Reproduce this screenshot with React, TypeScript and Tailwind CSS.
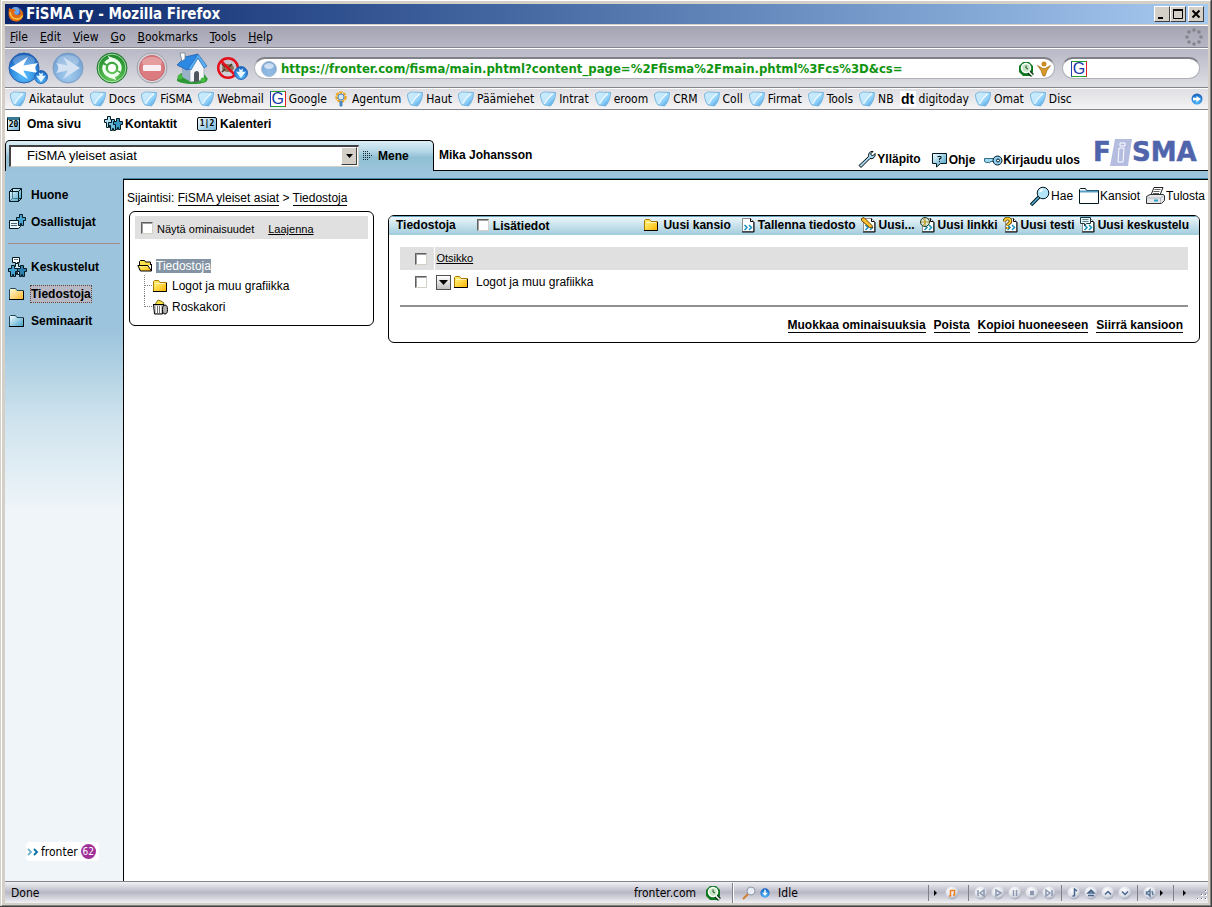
import React from 'react';
import type { ReactNode } from 'react';

const chromeFont = "font-['DejaVu_Sans_Condensed','DejaVu_Sans',sans-serif]";
const pageFont = "font-['Liberation_Sans',Arial,sans-serif]";

type SvgProps = { w?: number; h?: number; box?: string; children: ReactNode };

function Svg({ w = 16, h = 16, box, children }: SvgProps) {
    return (
        <svg width={w} height={h} viewBox={box ?? `0 0 ${w} ${h}`} fill="none" className="shrink-0" aria-hidden="true">
            {children}
        </svg>
    );
}

/* Shared gradients */
function Defs() {
    return (
        <svg width="0" height="0" className="absolute" aria-hidden="true">
            <defs>
                <radialGradient id="blueBall" cx="50%" cy="75%" r="75%">
                    <stop offset="0" stopColor="#5cc0ff" />
                    <stop offset="0.6" stopColor="#2a86dc" />
                    <stop offset="1" stopColor="#1a5cb4" />
                </radialGradient>
                <radialGradient id="paleBall" cx="50%" cy="75%" r="75%">
                    <stop offset="0" stopColor="#a4cef0" />
                    <stop offset="1" stopColor="#6c9cd0" />
                </radialGradient>
                <radialGradient id="greenBall" cx="50%" cy="75%" r="75%">
                    <stop offset="0" stopColor="#6cd060" />
                    <stop offset="1" stopColor="#188428" />
                </radialGradient>
                <radialGradient id="greyBall" cx="40%" cy="30%" r="75%">
                    <stop offset="0" stopColor="#ffffff" />
                    <stop offset="0.6" stopColor="#dcdfe8" />
                    <stop offset="1" stopColor="#9a9eb0" />
                </radialGradient>
                <linearGradient id="mark" x1="0" y1="0" x2="1" y2="1">
                    <stop offset="0" stopColor="#b4e2fc" />
                    <stop offset="0.6" stopColor="#94d4fa" />
                    <stop offset="1" stopColor="#3c94dc" />
                </linearGradient>
                <linearGradient id="yellow" x1="0" y1="0" x2="1" y2="1">
                    <stop offset="0.3" stopColor="#ffe860" />
                    <stop offset="1" stopColor="#ffb000" />
                </linearGradient>
                <linearGradient id="amber" x1="0" y1="0" x2="1" y2="1">
                    <stop offset="0.1" stopColor="#fff4cc" />
                    <stop offset="1" stopColor="#ffb428" />
                </linearGradient>
                <linearGradient id="teal" x1="0" y1="0" x2="1" y2="1">
                    <stop offset="0.1" stopColor="#e8f8ff" />
                    <stop offset="1" stopColor="#3c9cc4" />
                </linearGradient>
            </defs>
        </svg>
    );
}

function FirefoxIcon() {
    return (
        <Svg>
            <circle cx="8" cy="8" r="7.2" fill="#2b4fb0" />
            <circle cx="7.5" cy="5" r="4" fill="#6ca4e8" />
            <path d="M1 2c1 .6 2 1 3 .9C6 2.600 6.800 4 8 4.500 6 5 5.500 6 6.500 7.500 8 9.500 11 9.500 12 7.500c.6-1.500 0-3.500-1-4.500 3 1 4.600 3.500 4.200 6.500C14.500 13.500 11.500 15.500 8 15.500 3.800 15.500.8 12.500.6 8.500.5 6 .8 4 1 2z" fill="#e06a10" />
            <path d="M2 6c.5 4 3 7 7 7 2.500 0 4.500-1.500 5.500-3.500" stroke="#ffc840" strokeWidth="1.500" />
        </Svg>
    );
}

function BackIcon({ pale }: { pale?: boolean }) {
    return (
        <Svg w={32} h={32}>
            <circle cx="16" cy="16" r="15" fill={pale ? 'url(#paleBall)' : 'url(#blueBall)'} stroke={pale ? '#7c9cc4' : '#2c60a8'} />
            <ellipse cx="16" cy="9" rx="11" ry="6" fill="#fff" opacity="0.25" />
            {pale ? (
                <path d="M28 16 11 5c3 5 4 7 4.500 8.500L4 11c3 3.500 3 6.500 0 10l11.500-2.500C15 20 14 22 11 27z" fill="#d4e2f4" />
            ) : (
                <path d="M2 16 20 5c-3 5-4 7-4.500 8.500L30 11c-3.500 3.500-3.500 6.500 0 10l-14.500-2.500C16 20 17 22 20 27z" fill="#fff" />
            )}
        </Svg>
    );
}

function DropBall() {
    return (
        <Svg w={14} h={14}>
            <circle cx="7" cy="7" r="6.500" fill="url(#blueBall)" stroke="#2c6cb8" />
            <path d="M5 2.500 7 4l2-1.500L8.500 6 12 5.500 7 12 2 5.500 5.500 6z" fill="#e8f6ff" />
        </Svg>
    );
}

function ReloadIcon() {
    return (
        <Svg w={32} h={32}>
            <circle cx="16" cy="16" r="15" fill="url(#greenBall)" stroke="#247830" />
            <circle cx="16" cy="16" r="13.800" stroke="#c8ecc8" strokeWidth=".8" />
            <circle cx="16" cy="16" r="8" stroke="#f0fff0" strokeWidth="3.500" strokeDasharray="23 2.130" transform="rotate(35 16 16)" />
            <path d="m12 4 8 3-6 3zM20 28l-8-3 6-3z" fill="#f0fff0" />
            <circle cx="16" cy="16" r="4" fill="#fff" />
        </Svg>
    );
}

function StopIcon() {
    return (
        <Svg w={32} h={32}>
            <circle cx="16" cy="16" r="15" fill="#d4d4dc" stroke="#a0a0ac" />
            <circle cx="16" cy="16" r="12.500" fill="#dc7c80" stroke="#c46870" />
            <ellipse cx="16" cy="10" rx="10" ry="5" fill="#fff" opacity="0.25" />
            <rect x="7" y="13" width="18" height="6" rx="1" fill="#f6eef0" />
        </Svg>
    );
}

function HomeIcon() {
    return (
        <Svg w={32} h={32}>
            <path d="M1 29c0-4 2-3 3-7 2-2 5-1 6 1h14c2-2 6-1 6 2 3 1 1 4 0 5-8 3-21 3-29-1z" fill="#2c9834" />
            <path d="m6 13 9 4v13l-9-5z" fill="#98b0c8" />
            <path d="M14 17 22 6l6 9v13l-14 2z" fill="#f4f6fa" stroke="#8c9cb0" strokeWidth=".6" />
            <path d="M1 13 9 5l13-3-8 14-3 2z" fill="#2c88e0" stroke="#1858a8" strokeWidth=".7" />
            <path d="m22 2 9 12-3 2-6-10-7 12-3-1z" fill="#58b0f4" stroke="#1858a8" strokeWidth=".6" />
            <path d="M4 1h5v6l-3 2z" fill="#fff" stroke="#708090" strokeWidth=".8" />
            <path d="M18 30v-8c0-3.500 5-4.500 5-.5V29z" fill="#50545c" />
            <circle cx="4" cy="25" r="2.500" fill="#48b840" />
            <circle cx="27" cy="28" r="2.500" fill="#48b840" />
        </Svg>
    );
}

function NoBugIcon() {
    return (
        <Svg w={24} h={24}>
            <ellipse cx="12" cy="12" rx="6" ry="4" fill="#8c7458" />
            <path d="m6 8 3 3m7-3-3 3M6 16l3-3m7 3-3-3" stroke="#483420" strokeWidth="1.500" />
            <circle cx="12" cy="12" r="9.800" stroke="#e4101c" strokeWidth="2.500" />
            <path d="m5 5 14 14" stroke="#e4101c" strokeWidth="2.500" />
        </Svg>
    );
}

function SiteBall() {
    return (
        <Svg>
            <circle cx="8" cy="8" r="7.500" fill="url(#paleBall)" stroke="#a8bcd4" />
            <path d="M2 10c2-3 4 0 6-2s4 1 6 1c-1 4-4 5.500-6 5.500S3 13 2 10z" fill="#88b4e0" opacity=".7" />
            <ellipse cx="8" cy="5" rx="5" ry="3" fill="#fff" opacity=".6" />
        </Svg>
    );
}

function ClockIcon() {
    return (
        <Svg>
            <path d="M1 5 5 1h6l4 4v6l-3 4H5l-4-4z" fill="#107820" />
            <path d="m10 10 4.500 4.500" stroke="#083c10" strokeWidth="4" />
            <circle cx="8" cy="7" r="4.500" fill="#c4e4c4" stroke="#fff" strokeWidth="1.500" />
            <path d="M8 4.500V7l2 1" stroke="#184820" />
            <path d="m11 11 3.500 3.500" stroke="#fff" strokeWidth="1.500" />
        </Svg>
    );
}

function PersonIcon() {
    return (
        <Svg>
            <circle cx="8" cy="3" r="2.500" fill="#c88c20" />
            <path d="M1.500 4.500 7 7.500h2l5.500-3-3.500 5-2 5.500H7L5 9.500z" fill="#d89828" stroke="#906010" strokeWidth=".6" />
        </Svg>
    );
}

function GoogleIcon() {
    return (
        <span className="flex size-4 shrink-0 items-center justify-center border border-t-[#20a030] border-r-[#e02020] border-b-[#20a030] border-l-[#2040b0] bg-white font-['Liberation_Sans',sans-serif] text-base leading-none text-[#1838a8]">
            G
        </span>
    );
}

function MarkIcon() {
    return (
        <Svg>
            <path d="M.5 3 4 1l11.500.5c0 5-1.500 10-5 13.500L4 14C1.500 11 .5 7 .5 3z" fill="url(#mark)" stroke="#6cacd8" strokeWidth=".8" />
            <path d="M1 3.500 4 1.500l9 .5-5 5-4 6C2.500 10.500 1.300 7 1 3.500z" fill="#dcf2fe" opacity=".6" />
            <path d="M13 2.500 8 7.500 4.500 13" stroke="#f4fbff" strokeWidth="1.200" />
        </Svg>
    );
}

function AgentumIcon() {
    return (
        <Svg>
            <circle cx="8" cy="6" r="4.500" stroke="#f0a820" strokeWidth="2.500" strokeDasharray="3 .8" />
            <circle cx="8" cy="6" r="3" fill="#d4e8fa" stroke="#4888c8" />
            <path d="M6.500 10h3v4.500c0 1.500-3 1.500-3 0z" fill="#4888c8" />
        </Svg>
    );
}

function ThrobberIcon() {
    const dots = [[9, 2], [14, 4], [16, 9], [14, 14], [9, 16], [4, 14], [2, 9], [4, 4]];
    return (
        <Svg w={18} h={18}>
            {dots.map(([x, y]) => <circle key={`${x}-${y}`} cx={x} cy={y} r="1.800" fill="#84848c" />)}
        </Svg>
    );
}

/* Page icons */
function FolderIcon() {
    return (
        <Svg w={16} h={14}>
            <path d="M1.500 12.500v-10l1-1h4l1.500 2h6.500v9z" fill="url(#yellow)" stroke="#a87800" />
            <path d="M1 12.500h13.500V4" stroke="#000" />
            <path d="M3 4.500h10" stroke="#fff" opacity=".6" />
        </Svg>
    );
}

function SideFolder({ fill }: { fill: string }) {
    return (
        <Svg w={18} h={14}>
            <path d="M1.500 12.500v-10l1-1h5l1.500 2h6.500v9z" fill={fill} stroke="#204858" />
            <path d="M1 12.500h14.500V4" stroke="#000" />
        </Svg>
    );
}

function OpenFolderIcon() {
    return (
        <Svg w={16} h={14}>
            <path d="M2.500 11V2.500l1-1h4l1 1.500h5v3" fill="#ffe048" stroke="#000" />
            <path d="M.8 6.500h10l3.700 5.500H3.500z" fill="url(#yellow)" stroke="#000" />
            <path d="M14.500 5v7" stroke="#000" />
        </Svg>
    );
}

function TrashIcon() {
    return (
        <Svg w={17} h={16}>
            <path d="m4 4 2-3 3 1 3 2-1 2H3z" fill="#f8e040" stroke="#605000" strokeWidth=".8" />
            <path d="M1.500 5.500h10l-1 9.500h-8z" fill="#c4c4c4" stroke="#000" />
            <path d="M4.500 7v7M6.500 7v7M8.500 7v7" stroke="#fff" />
            <path d="M5.500 7v7M7.500 7v7" stroke="#707070" />
            <ellipse cx="13" cy="10.500" rx="2.500" ry="4.500" fill="#b0b0b0" stroke="#000" />
            <path d="M1 5.500h11" stroke="#000" />
        </Svg>
    );
}

const figure = 'M3.500.500h3v3h3v3h-2v5h-2v-2h-1v2h-2v-5h-2v-3h3z';

function Figure({ x, y, fill }: { x: number; y: number; fill: string }) {
    return <path d={figure} transform={`translate(${x} ${y})`} fill={fill} stroke="#001820" />;
}

function KontaktitIcon() {
    return (
        <Svg w={20} h={18}>
            <Figure x={1} y={1} fill="#b4e0f4" />
            <Figure x={5} y={4} fill="#70bcdc" />
            <Figure x={10} y={3} fill="#3898c4" />
        </Svg>
    );
}

function CalIcon({ text, wide }: { text: string; wide?: boolean }) {
    return (
        <span
            className={`flex h-[14px] items-center justify-center border border-black bg-linear-to-br from-[#f0faff] to-[#74b8d8] font-['DejaVu_Sans_Mono',monospace] text-[8px] leading-none font-bold text-black ${wide ? 'w-5 rounded-[2px]' : 'w-[13px] border-t-[3px] border-t-[#387890]'}`}
        >
            {text}
        </span>
    );
}

function CubeIcon() {
    return (
        <Svg w={18} h={16}>
            <path d="M1.500 4.500h9v10h-9zM4.500 1.500h9v10h-3v-7h-6z" fill="url(#teal)" />
            <path d="M1.500 4.500h9v10h-9zM4.500 1.500h9v10h-3M4.500 4.500v-3M1.500 4.500l3-3M10.500 4.500l3-3M10.500 14.500l3-3" stroke="#001820" />
            <path d="M4.500 5v6.500h6M2 14l2.500-2.500" stroke="#487c90" />
        </Svg>
    );
}

function MembersIcon() {
    return (
        <Svg w={19} h={16}>
            <path d="M1.500 6.500h11v6l-2 2h-9z" fill="#eaf6fc" stroke="#001820" />
            <path d="M3 9.500h6M3 11.500h6" stroke="#406878" />
            <Figure x={8} y={0} fill="#48a4d0" />
        </Svg>
    );
}

function TalkIcon() {
    return (
        <Svg w={20} h={20}>
            <Figure x={4} y={6} fill="#d4eefa" />
            <Figure x={0} y={8} fill="#48a4d0" />
            <Figure x={9} y={8} fill="#2c80b0" />
            <path d="M4.500.500h7v5h-2l-2 2v-2h-3z" fill="#fff" stroke="#001820" />
            <path d="M6 2.500h4" stroke="#608090" />
        </Svg>
    );
}

function WrenchIcon() {
    return (
        <Svg w={19} h={18}>
            <path d="m1 15.500 9.500-9C10 3.500 12 1 15 1.500L12.500 4l2 2L17 3.500C18 6.500 15 9.500 12 8.500L3 17.500z" fill="#a0d4ec" stroke="#000" />
        </Svg>
    );
}

function HelpIcon() {
    return (
        <Svg w={17} h={16}>
            <path d="M1.500 1.500h14v10h-6l-4 3.500v-3.500h-4z" fill="url(#teal)" stroke="#001820" />
            <path d="M6.500 4.500h3.500v2H8.500V8M8.500 8.800v1.400" stroke="#001820" />
        </Svg>
    );
}

function KeyIcon() {
    return (
        <Svg w={19} h={12}>
            <path d="M.5 4.500h10v3h-4l-1 1.500-1.500-1-1 1L.5 7.500z" fill="#a0d8f0" stroke="#2c6c88" />
            <circle cx="13.500" cy="6.500" r="4.500" fill="#8cccec" stroke="#001820" />
            <circle cx="14" cy="6.500" r="1.500" fill="#fff" stroke="#001820" />
        </Svg>
    );
}

function SearchIcon() {
    return (
        <Svg w={20} h={20}>
            <path d="m9 11-8 8" stroke="#001820" strokeWidth="3.500" />
            <path d="m9 11-7.500 7.500" stroke="#58b8e0" strokeWidth="1.500" />
            <circle cx="13" cy="7" r="5.800" fill="#b4e4f8" stroke="#001820" />
            <path d="M10 6a3.500 3.500 0 0 1 3-2.500" stroke="#fff" strokeWidth="2" />
        </Svg>
    );
}

function WindowIcon() {
    return (
        <Svg w={20} h={16}>
            <path d="M.5 15.500v-14l1-1h5l1 2h12v13z" fill="#fff" stroke="#001820" />
            <path d="M1 2.500h18v2H1z" fill="#58a0c8" />
        </Svg>
    );
}

function PrinterIcon() {
    return (
        <Svg w={19} h={17}>
            <path d="m5 8 3-7.500h9L14 8z" fill="#fff" stroke="#202020" />
            <path d="M8.500 2.500h6M7.500 4.500h6M7 6.500h6" stroke="#606060" />
            <path d="M.5 9.500 4 7.500h13l1.500 1v5l-3 3H.500z" fill="#e4e6ea" stroke="#303030" />
            <path d="M.5 11h14l3.500-2.500M14.500 11v5" stroke="#b0b8c0" />
            <path d="M8 13.500h4" stroke="#28a0c8" strokeWidth="2" />
        </Svg>
    );
}

/* Sheet with chevrons, plus the small mark of each kind on top of it */
function DocIcon({ kind }: { kind: string }) {
    return (
        <Svg w={16} h={16}>
            <path d="M2.500 1.500h8l3 3v10h-11z" fill="#fff" stroke="#909090" />
            <path d="M2 15h12V5" stroke="#000" />
            <path d="M10.500 1.500v3h3" stroke="#000" />
            <path d="m4.500 8 2.500 2.500L4.500 13M9 8l2.500 2.500L9 13" stroke="#1890c0" strokeWidth="1.500" />
            {kind === 'pencil' && <path d="M.5 1.500 3 .5l8 8 .5 2.500-3-.5-8-7z" fill="#ffc030" stroke="#604000" />}
            {kind === 'link' && (
                <>
                    <circle cx="5" cy="5" r="4.500" fill="#d4ece0" stroke="#203020" />
                    <path d="M1 5h8M5 1v8M3 2c3 2 3 5 0 6" stroke="#c09820" />
                </>
            )}
            {kind === 'test' && (
                <>
                    <path d="M1.500 4.500c0-4 6-4 6 0 0 2-3 1.500-3 4M4.500 10v2" stroke="#503800" strokeWidth="3.500" />
                    <path d="M1.500 4.500c0-4 6-4 6 0 0 2-3 1.500-3 4M4.500 10v2" stroke="#ffd030" strokeWidth="1.800" />
                </>
            )}
            {kind === 'talk' && (
                <>
                    <path d="M.5.5h10v6h-4l-2 2.500V6.500h-4z" fill="#e8f8f4" stroke="#203840" />
                    <path d="M2.500 2.500h6M2.500 4.500h6" stroke="#60808c" />
                </>
            )}
        </Svg>
    );
}

function DotsIcon() {
    const dots = [[0, 0], [2, 0], [4, 0], [0, 2], [2, 2], [4, 2], [6, 2], [0, 4], [2, 4], [4, 4], [6, 4], [8, 4], [0, 6], [2, 6], [4, 6], [6, 6], [0, 8], [2, 8], [4, 8]];
    return (
        <Svg w={9} h={9}>
            {dots.map(([x, y]) => <rect key={`${x}-${y}`} x={x} y={y} width="1" height="1" fill="#182830" />)}
        </Svg>
    );
}

function FismaLogo() {
    return (
        <svg width="110" height="30" viewBox="0 0 110 30" className="shrink-0" role="img" aria-label="FiSMA">
            <path d="M21 1h17l-4 27H16z" fill="#b4bce0" />
            <path d="M26 5h5v3h-5zM25 10h5l-1 14h-5z" fill="#b4bce0" stroke="#fff" />
            <g fill="#5064ac" stroke="#5064ac" strokeWidth=".5" fontFamily="DejaVu Sans, sans-serif" fontWeight="bold" fontSize="26">
                <text x="-1" y="23">F</text>
                <text x="38" y="23">SMA</text>
            </g>
        </svg>
    );
}

function FronterLogo() {
    return (
        <div className="flex h-[19px] w-[73px] items-center gap-0.5 rounded-sm bg-white px-px">
            <Svg w={12} h={8}>
                <path d="m1 1 3 3-3 3" stroke="#70b4d0" strokeWidth="1.800" />
                <path d="m7 1 3 3-3 3" stroke="#0870a0" strokeWidth="1.800" />
            </Svg>
            <span className={`${chromeFont} text-xs leading-none font-normal text-black`}>fronter</span>
            <span className="ml-px flex size-[15px] items-center justify-center rounded-full bg-[#a03098] font-['DejaVu_Sans_Condensed',sans-serif] text-[10px] leading-none font-normal text-white">62</span>
        </div>
    );
}

const menus = ['File', 'Edit', 'View', 'Go', 'Bookmarks', 'Tools', 'Help'];
const bookmarks = ['Aikataulut', 'Docs', 'FiSMA', 'Webmail', 'Google', 'Agentum', 'Haut', 'Päämiehet', 'Intrat', 'eroom', 'CRM', 'Coll', 'Firmat', 'Tools', 'NB', 'digitoday', 'Omat', 'Disc'];

function bookmarkIcon(name: string) {
    if (name === 'Google') return <GoogleIcon />;
    if (name === 'Agentum') return <AgentumIcon />;
    if (name === 'digitoday') {
        return <span className="flex size-4 items-center justify-center bg-white font-['Liberation_Sans',sans-serif] text-sm leading-none font-bold">dt</span>;
    }
    return <MarkIcon />;
}

function WinButton({ label, children }: { label: string; children: ReactNode }) {
    return (
        <button aria-label={label} className="flex h-4 w-4 items-center justify-center border border-t-white border-r-[#404040] border-b-[#404040] border-l-white bg-[#d4d0c8]">
            <Svg w={10} h={10}>{children}</Svg>
        </button>
    );
}

function BrowserChrome() {
    return (
        <header className={`${chromeFont} text-xs text-black`}>
            <div className="flex h-5 items-center bg-linear-to-r from-[#0a246a] to-[#a6caf0] pr-1 pl-[3px]">
                <FirefoxIcon />
                <h1 className="ml-0.5 flex-1 text-[15px] leading-5 font-bold text-white">FiSMA ry - Mozilla Firefox</h1>
                <WinButton label="Minimize"><path d="M1 8h5v2H1z" fill="#000" /></WinButton>
                <WinButton label="Maximize"><path d="M.5 1.500h9v8h-9z" stroke="#000" /><path d="M0 1h10" stroke="#000" strokeWidth="2" /></WinButton>
                <span className="w-0.5" />
                <WinButton label="Close"><path d="m1.500 1.500 7 7m0-7-7 7" stroke="#000" strokeWidth="2" /></WinButton>
            </div>
            <nav className="mt-px flex h-[23px] items-center gap-3 border-t border-b border-t-white border-b-[#84848c] bg-linear-to-b from-[#a4a4b2] to-[#b6b6c4] pr-[5px] pl-[5px]">
                {menus.map(m => (
                    <button key={m}><u>{m[0]}</u>{m.slice(1)}</button>
                ))}
                <span className="ml-auto"><ThrobberIcon /></span>
            </nav>
            <div className="flex h-10 items-center border-t border-b border-t-white border-b-[#84848c] bg-linear-to-b from-[#b8b8c6] to-[#dedee4] pl-[3px]">
                <button aria-label="Back" className="flex items-end"><BackIcon /><span className="-ml-1.5"><DropBall /></span></button>
                <button aria-label="Forward" className="ml-1"><BackIcon pale /></button>
                <button aria-label="Reload" className="ml-3"><ReloadIcon /></button>
                <button aria-label="Stop" className="ml-2"><StopIcon /></button>
                <button aria-label="Home" className="ml-2"><HomeIcon /></button>
                <button aria-label="Block" className="ml-2 flex items-end"><NoBugIcon /><span className="-ml-1.5"><DropBall /></span></button>
                <div className="ml-1.5 flex h-[22px] flex-1 items-center rounded-full border border-t-2 border-[#b0b0b8] border-t-[#808088] bg-white pr-0.5 pl-1.5">
                    <SiteBall />
                    <input
                        aria-label="Location"
                        className="ml-1 min-w-0 flex-1 text-[13px] font-bold text-[#109410] outline-none"
                        defaultValue="https://fronter.com/fisma/main.phtml?content_page=%2Ffisma%2Fmain.phtml%3Fcs%3D&cs="
                    />
                    <span className="flex gap-0.5"><ClockIcon /><PersonIcon /></span>
                </div>
                <div className="mr-2 ml-[7px] flex h-[22px] w-[138px] items-center rounded-full border border-t-2 border-[#b0b0b8] border-t-[#808088] bg-white px-2">
                    <GoogleIcon />
                    <input aria-label="Search" className="min-w-0 flex-1 outline-none" />
                </div>
            </div>
            <nav className="flex h-[22px] items-center gap-1.5 border-t border-b border-t-white border-b-[#84848c] bg-linear-to-b from-[#dedee4] to-[#f4f4f4] px-[5px]">
                {bookmarks.map(b => (
                    <a key={b} href="#" className="flex items-center gap-[3px]">{bookmarkIcon(b)}{b}</a>
                ))}
                <button aria-label="More bookmarks" className="ml-auto">
                    <Svg w={12} h={12}>
                        <circle cx="6" cy="6" r="5.500" fill="url(#blueBall)" />
                        <path d="M2 4.500 5.500 5V3L10 6 5.500 9V7L2 7.500z" fill="#fff" />
                    </Svg>
                </button>
            </nav>
        </header>
    );
}

function PageHeader() {
    return (
        <>
            <nav className="flex h-[30px] items-center pb-[3px] pl-0.5 font-bold">
                <a href="#" className="flex items-center gap-[7px]"><CalIcon text="20" />Oma sivu</a>
                <a href="#" className="ml-[22px] flex items-center gap-0.5"><KontaktitIcon />Kontaktit</a>
                <a href="#" className="ml-5 flex items-center gap-[3px]"><CalIcon text="1|2" wide />Kalenteri</a>
            </nav>
            <div className="flex h-[31px]">
                <form className="flex w-[429px] items-center rounded-t-[5px] border-t border-r border-l border-black bg-[linear-gradient(to_bottom,#dceff7_0%,#b4d6e6_35%,#90c0d4_55%,#9cc4dc_100%)] pb-px pl-[3px]" onSubmit={e => e.preventDefault()}>
                    <div className="relative w-[350px]">
                        <select aria-label="Huone" className="h-[22px] w-full appearance-none border border-t-2 border-l-2 border-[#d4d0c8] border-t-[#404040] border-l-[#404040] bg-white pl-4 text-[13px] text-black outline-none">
                            <option>FiSMA yleiset asiat</option>
                        </select>
                        <span className="pointer-events-none absolute top-0.5 right-0.5 flex h-[18px] w-4 items-center justify-center border border-t-white border-r-[#404040] border-b-[#404040] border-l-white bg-[#d4d0c8]">
                            <Svg w={7} h={4}><path d="M0 0h7L3.500 4z" fill="#000" /></Svg>
                        </span>
                    </div>
                    <button className="ml-1 flex items-center gap-1.5 font-bold"><DotsIcon />Mene</button>
                </form>
                <div className="flex flex-1 items-end border-b border-black pr-1 font-bold">
                    <span className="mb-[7px] ml-[5px] flex-1">Mika Johansson</span>
                    <a href="#" className="mb-0.5 flex items-center"><WrenchIcon />Ylläpito</a>
                    <a href="#" className="mb-0.5 ml-[10px] flex items-center gap-px"><HelpIcon />Ohje</a>
                    <a href="#" className="mb-0.5 ml-[9px] flex items-center"><KeyIcon />Kirjaudu ulos</a>
                    <span className="mb-0.5 ml-[14px]"><FismaLogo /></span>
                </div>
            </div>
            <div className="flex h-[9px]">
                <div className="w-[118px] bg-[#9cc4dc]" />
                <div className="flex-1 border-b border-black bg-[#9cc4dc] shadow-[inset_0_-1px_0_#4888a8]" />
            </div>
        </>
    );
}

function SideLink({ icon, active, children }: { icon: ReactNode; active?: boolean; children: ReactNode }) {
    return (
        <a href="#" className="flex h-[27px] items-center">
            <span className="w-[22px] shrink-0">{icon}</span>
            <span className={active ? 'border border-dotted border-[#604838] bg-[#b8b8c4]' : 'pl-px'}>{children}</span>
        </a>
    );
}

function Sidebar() {
    return (
        <aside className="flex w-[119px] shrink-0 flex-col border-r border-black bg-[linear-gradient(to_bottom,#9cc4dc_0px,#9cc4dc_150px,#cfe3ee_240px,#eff5f9_330px)] pt-px pl-[3px] font-bold">
            <SideLink icon={<CubeIcon />}>Huone</SideLink>
            <SideLink icon={<MembersIcon />}>Osallistujat</SideLink>
            <hr className="mt-2 mr-[3px] mb-[9px] border-[#a88c84]" />
            <SideLink icon={<TalkIcon />}>Keskustelut</SideLink>
            <SideLink icon={<SideFolder fill="url(#amber)" />} active>Tiedostoja</SideLink>
            <SideLink icon={<SideFolder fill="url(#teal)" />}>Seminaarit</SideLink>
            <div className="mt-auto mb-5 ml-[18px]"><FronterLogo /></div>
        </aside>
    );
}

const checkbox = 'size-3 shrink-0 appearance-none border border-[#d4d0c8] border-t-[#606060] border-l-[#606060] bg-white shadow-[inset_1px_1px_0_#a0a0a0] checked:bg-[#404040]';

function TreePanel() {
    return (
        <section className="h-[115px] w-[245px] shrink-0 rounded-md border border-black px-[5px] pt-1">
            <div className="flex h-[23px] items-center bg-[#e0e0e0] pl-1.5 text-[11px]">
                <label className="flex items-center gap-1"><input type="checkbox" className={checkbox} /><span className="pt-1">Näytä ominaisuudet</span></label>
                <a href="#" className="ml-[14px] pt-1 underline">Laajenna</a>
            </div>
            <ul className="mt-[18px]">
                <li>
                    <a href="#" className="flex h-[18px] items-center gap-[3px] pl-0.5"><OpenFolderIcon /><span className="bg-[#8494a4] leading-[14px] text-white">Tiedostoja</span></a>
                    <ul className="ml-[9px] text-black">
                        <li className="flex h-[21px] items-center border-l border-dotted border-[#808080]">
                            <span className="w-[7px] border-t border-dotted border-[#808080]" />
                            <a href="#" className="flex items-center gap-1"><FolderIcon />Logot ja muu grafiikka</a>
                        </li>
                        <li className="flex h-[21px]">
                            <span className="h-[11px] w-2 border-b border-l border-dotted border-[#808080]" />
                            <a href="#" className="flex items-center gap-[3px]"><TrashIcon />Roskakori</a>
                        </li>
                    </ul>
                </li>
            </ul>
        </section>
    );
}

const actions = [
    { label: 'Tallenna tiedosto', kind: 'file' },
    { label: 'Uusi...', kind: 'pencil' },
    { label: 'Uusi linkki', kind: 'link' },
    { label: 'Uusi testi', kind: 'test' },
    { label: 'Uusi keskustelu', kind: 'talk' },
];
const footerLinks = ['Muokkaa ominaisuuksia', 'Poista', 'Kopioi huoneeseen', 'Siirrä kansioon'];

function FilesPanel() {
    return (
        <section className="mt-1 h-32 flex-1 overflow-hidden rounded-md border border-black">
            <div className="flex h-[19px] items-center bg-linear-to-b from-[#f0f8fc] to-[#a0ccdc] pr-[10px] pb-0.5 pl-[7px] font-bold whitespace-nowrap shadow-[inset_0_1px_0_#68a4c0]">
                <h2>Tiedostoja</h2>
                <label className="mr-auto ml-[21px] flex items-center gap-1"><input type="checkbox" className={checkbox} /><span className="pt-0.5">Lisätiedot</span></label>
                <div className="flex items-center gap-[5px]">
                    <button className="mr-1 flex items-center gap-1"><FolderIcon />Uusi kansio</button>
                    {actions.map(a => (
                        <button key={a.label} className="flex items-center gap-0.5"><DocIcon kind={a.kind} />{a.label}</button>
                    ))}
                </div>
            </div>
            <div className="px-[11px] pt-3">
                <table className="w-full border-collapse text-left">
                    <thead>
                        <tr className="h-[23px] bg-[#e0e0e0] text-[11px]">
                            <th className="w-[34px] border-r border-white pl-[15px]"><input type="checkbox" aria-label="Valitse kaikki" className={`${checkbox} block`} /></th>
                            <th className="pl-0.5 font-normal"><a href="#" className="underline">Otsikko</a></th>
                        </tr>
                    </thead>
                    <tbody>
                        <tr className="h-6">
                            <td className="pl-[15px]"><input type="checkbox" aria-label="Valitse kansio" className={`${checkbox} block`} /></td>
                            <td className="pl-0.5">
                                <div className="flex items-center">
                                    <button aria-label="Toiminnot" className="flex size-[15px] items-center justify-center border border-[#505050] bg-linear-to-b from-white to-[#c0c0c0]">
                                        <Svg w={9} h={5}><path d="M0 0h9L4.500 5z" fill="#000" /></Svg>
                                    </button>
                                    <span className="ml-0.5"><FolderIcon /></span>
                                    <a href="#" className="ml-[7px]">Logot ja muu grafiikka</a>
                                </div>
                            </td>
                        </tr>
                    </tbody>
                </table>
                <hr className="mt-[11px] border-t-2 border-[#909090]" />
                <div className="mt-[11px] flex justify-end gap-2 pr-[5px] font-bold">
                    {footerLinks.map(l => <a key={l} href="#" className="border-b border-black leading-[14px]">{l}</a>)}
                </div>
            </div>
        </section>
    );
}

const playGlyphs = ['M4 4v6M10 4 6 7l4 3z', 'M5 4l5 3-5 3z', 'M5.500 4v6M8.500 4v6', 'M5 5.500h4M5 7h4M5 8.500h4', 'M4 4l4 3-4 3zM10 4v6'];
const extraGlyphs = ['M7.500 10V3l2.500 2M5.500 10h2', 'M4 7l3-3 3 3zM4 9.500h6', 'M4 8.500 7 5.500l3 3', 'M4 5.500 7 8.500l3-3'];

function RoundButton({ d, color }: { d: string; color: string }) {
    return (
        <Svg w={14} h={14}>
            <circle cx="7" cy="7" r="6.500" fill="url(#greyBall)" />
            <path d={d} stroke={color} strokeWidth="1.500" />
        </Svg>
    );
}

function Separator() {
    return <span className="mx-0.5 h-4 w-px bg-[#808088]" />;
}

function Caret() {
    return <Svg w={4} h={6}><path d="M0 0v6l3-3z" fill="#000" /></Svg>;
}

function StatusBar() {
    return (
        <footer className={`${chromeFont} flex h-[22px] items-center border-t border-[#84848c] bg-linear-to-b from-[#f0f0f4] via-[#b8b8c6] to-[#f0f0f4] pl-1.5 text-xs text-black`}>
            <span className="flex-1">Done</span>
            <div className="flex w-[574px] items-center">
                <span className="flex items-center gap-[9px]">fronter.com<ClockIcon /></span>
                <span className="mr-2 ml-[11px] h-5 w-0.5 border-l border-[#808088] bg-white" />
                <Svg w={14} h={14}><circle cx="9" cy="5" r="4" fill="#e8eef8" stroke="#9098a8" /><path d="m6 8-5 5" stroke="#d08030" strokeWidth="2" /></Svg>
                <span className="mx-1 flex"><Svg w={10} h={10} box="0 0 14 14"><circle cx="7" cy="7" r="6.500" fill="url(#blueBall)" /><path d="M6 2.500h2v4h3L7 11 3 6.500h3z" fill="#fff" /></Svg></span>
                <span className="ml-1">Idle</span>
                <div className="ml-auto flex items-center gap-[3px]">
                    <Separator /><Caret />
                    <span className="mx-1 flex"><RoundButton d="M5.500 10V4.500h4V9M4 10h2M8 9h2" color="#f08020" /></span>
                    <Separator />
                    {playGlyphs.map(d => <RoundButton key={d} d={d} color="#8c98b0" />)}
                    <Separator />
                    {extraGlyphs.map(d => <RoundButton key={d} d={d} color="#48648c" />)}
                    <Separator />
                    <RoundButton d="M3.500 6v2h1.500l2 2V4L5 6zM9 5l1 4" color="#5c7898" />
                    <Caret />
                    <span className="ml-1 flex"><Separator /></span>
                    <span className="ml-1 flex"><Caret /></span>
                    <span className="ml-1.5 flex self-end">
                        <Svg w={12} h={12}>
                            <path d="M9 1h2v2H9zM9 5h2v2H9zM5 5h2v2H5zM9 9h2v2H9zM5 9h2v2H5zM1 9h2v2H1z" fill="#fff" />
                            <path d="M9 1h1v1H9zM9 5h1v1H9zM5 5h1v1H5zM9 9h1v1H9zM5 9h1v1H5zM1 9h1v1H1z" fill="#707078" />
                        </Svg>
                    </span>
                </div>
            </div>
        </footer>
    );
}

export default function App() {
    return (
        <div className="flex min-h-screen flex-col border-r border-b border-[#404040] bg-[#d4d0c8] pl-px">
            <Defs />
            <div className="flex flex-1 flex-col border-t border-r border-b border-l border-t-white border-r-[#808080] border-b-[#808080] border-l-white pt-[3px] pr-0.5 pb-0.5 pl-[3px]">
                <BrowserChrome />
                <main className={`${pageFont} flex flex-1 flex-col bg-white text-xs text-black`}>
                    <PageHeader />
                    <div className="flex flex-1">
                        <Sidebar />
                        <div className="flex-1 pr-2 pl-[5px]">
                            <div className="flex h-[31px] items-center justify-between">
                                <p className="-ml-0.5 pt-1">
                                    Sijaintisi: <a href="#" className="border-b border-black">FiSMA yleiset asiat</a> &gt; <a href="#" className="border-b border-black">Tiedostoja</a>
                                </p>
                                <div className="-mr-[5px] flex items-center gap-1.5">
                                    <a href="#" className="flex items-center gap-px"><SearchIcon />Hae</a>
                                    <a href="#" className="flex items-center gap-px"><WindowIcon />Kansiot</a>
                                    <a href="#" className="flex items-center gap-px"><PrinterIcon />Tulosta</a>
                                </div>
                            </div>
                            <div className="flex gap-[14px]">
                                <TreePanel />
                                <FilesPanel />
                            </div>
                        </div>
                    </div>
                </main>
                <StatusBar />
            </div>
        </div>
    );
}
